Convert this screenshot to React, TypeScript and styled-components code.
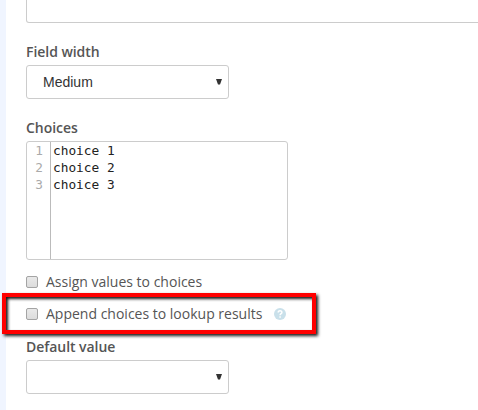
import React from "react";
import styled, { createGlobalStyle } from "styled-components";

const Global = createGlobalStyle`
  * { box-sizing: border-box; }
  body { margin: 0; background: #fff; overflow: hidden; }
`;

const Page = styled.main`
  height: 410px;
  width: 478px;
  overflow: hidden;
  padding-left: 26px;
  background: linear-gradient(to right, #f0f5ff 6px, #fff 6px);
  color: #555;
  font-family: "Open Sans", sans-serif;
  font-size: 14px;
`;

const TextField = styled.div`
  height: 23px;
  width: 480px;
  border: 1px solid #ccc;
  border-top: 0;
  border-radius: 0 0 3px 3px;
`;

const Label = styled.div<{ $top: number }>`
  margin-top: ${(p) => p.$top}px;
  height: 20px;
  line-height: 20px;
  font-size: 14px;
  font-weight: 600;
  letter-spacing: -0.05px;
  white-space: nowrap;
`;

const SelectBox = styled.div<{ $top: number }>`
  display: flex;
  align-items: center;
  justify-content: space-between;
  width: 203px;
  height: 34px;
  margin-top: ${(p) => p.$top}px;
  padding: 0 6px 0 16px;
  border: 1px solid #ccc;
  border-radius: 3px;
  color: #333;
  font-family: "Liberation Sans", Arial, sans-serif;
  font-size: 14px;
  line-height: 20px;
`;

const Arrow = styled.svg`
  display: block;
  margin-left: auto;
  width: 6px;
  height: 6px;
  fill: #333;
`;

const Editor = styled.div`
  display: flex;
  width: 262px;
  height: 119px;
  margin-top: 3px;
  border: 1px solid #ccc;
  border-radius: 3px;
  font-family: "DejaVu Sans Mono", monospace;
  font-size: 12.8px;
  line-height: 17px;
  white-space: pre;
`;

const Gutter = styled.div`
  width: 24px;
  padding: 0 7px 0 0;
  border-right: 1px solid #bbb;
  color: #aaa;
  text-align: right;
`;

const Code = styled.div`
  padding-left: 2px;
  color: #222;
`;

const Option = styled.div<{ $top: number }>`
  display: flex;
  align-items: center;
  height: 20px;
  margin-top: ${(p) => p.$top}px;
  line-height: 20px;
  white-space: nowrap;
`;

const Check = styled.span`
  width: 12px;
  height: 12px;
  margin-right: 8px;
  border: 1px solid #a4a4a4;
  border-radius: 2px;
  background: linear-gradient(#e9e9e9, #dcdcdc);
`;

const Help = styled.svg`
  width: 12px;
  height: 12px;
  margin-left: 12px;
`;

const Highlight = styled.div`
  width: 314px;
  height: 41px;
  margin: 1px 0 0 -24px;
  padding: 7px 0 0 20px;
  border: 4px solid #f00;
  box-shadow: 2px 2px 3px rgba(0, 0, 0, 0.9), inset 2px 2px 3px rgba(0, 0, 0, 0.9);
`;

const DropArrow = () => (
  <Arrow viewBox="0 0 6 6"><path d="M0 0h6L4 5.5H2Z" /></Arrow>
);

const choices = ["choice 1", "choice 2", "choice 3"];

export default function App() {
  return (
    <Page>
      <Global />
      <TextField />
      <Label $top={19}>Field width</Label>
      <SelectBox $top={3}>Medium<DropArrow /></SelectBox>
      <Label $top={19}>Choices</Label>
      <Editor>
        <Gutter>{choices.map((c, i) => <div key={c}>{i + 1}</div>)}</Gutter>
        <Code>{choices.map((c) => <div key={c}>{c}</div>)}</Code>
      </Editor>
      <Option $top={12}><Check />Assign values to choices</Option>
      <Highlight>
        <Option $top={0}>
          <Check />
          Append choices to lookup results
          <Help viewBox="0 0 12 12">
            <circle cx="6" cy="6" r="6" fill="#c9e0ea" />
            <path d="M4.2 4.6C4.2 2.2 7.9 2.3 7.9 4.4C7.9 5.7 6.1 5.6 6.1 7.2M6.1 8.3V9.7" fill="none" stroke="#fff" strokeWidth="1.5" />
          </Help>
        </Option>
      </Highlight>
      <Label $top={3}>Default value</Label>
      <SelectBox $top={3}><DropArrow /></SelectBox>
    </Page>
  );
}
